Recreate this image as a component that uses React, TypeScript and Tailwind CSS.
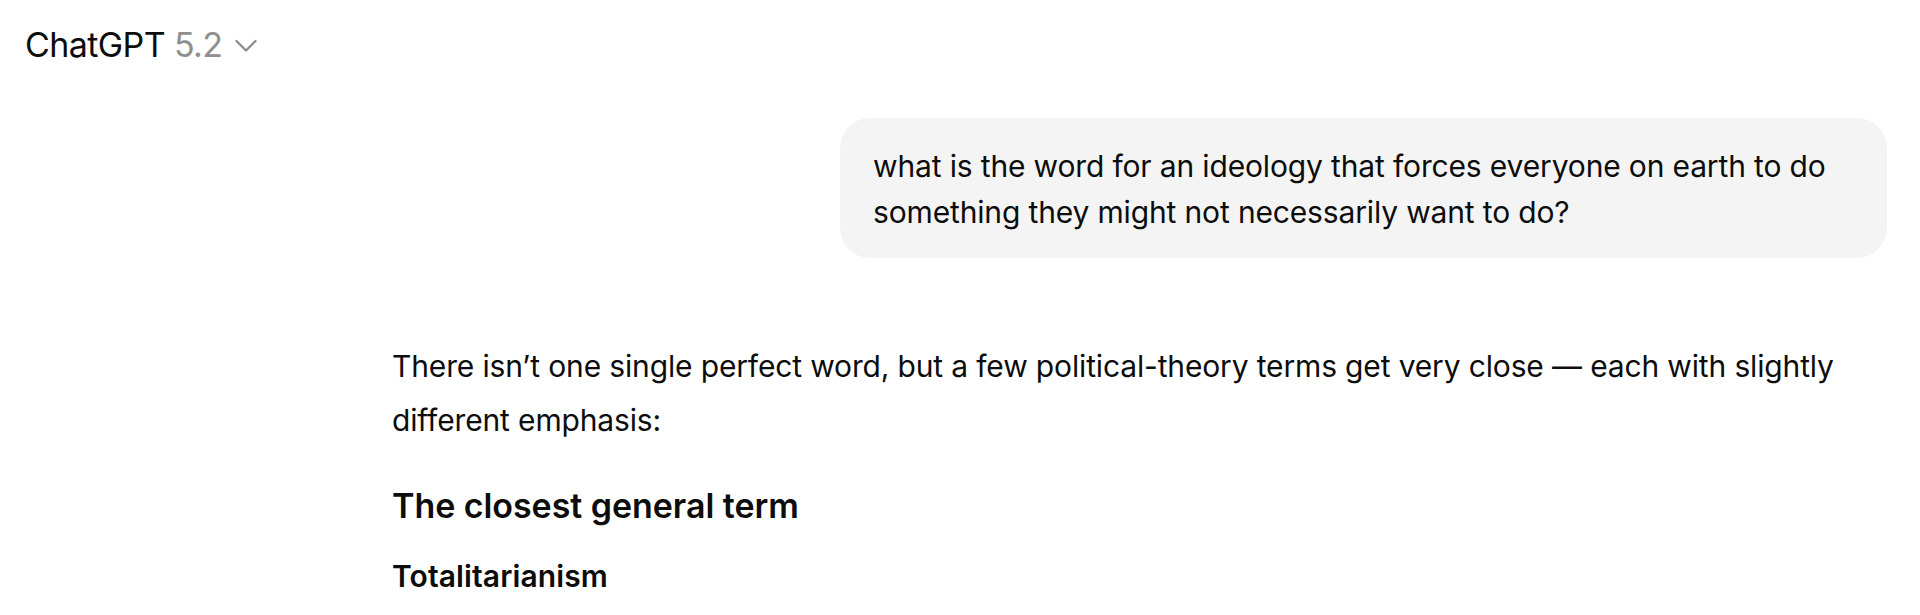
// Conversation header with the model picker
function Header() {
  return (
    <header className="flex items-center pl-[25px] pt-[22px] leading-[46px]">
      <button type="button" className="flex items-center gap-[13px] text-[34px] tracking-[-0.6px]">
        <span>
          <span className="text-[#0d0d0d]">ChatGPT</span>{" "}
          <span className="text-[#8f8f8f]">5.2</span>
        </span>
        <svg width="22" height="14" viewBox="0 0 22 14" fill="none" className="mt-[2px] text-[#8a8a8a]">
          <polyline
            points="1.5,2 11,11.5 20.5,2"
            stroke="currentColor"
            strokeWidth="2.2"
            strokeLinecap="round"
            strokeLinejoin="round"
          />
        </svg>
      </button>
    </header>
  );
}

function UserMessage({ text }: { text: string }) {
  return (
    <div className="flex justify-end">
      <div className="max-w-[1047px] rounded-[30px] bg-[#f4f4f4] px-[33px] pt-[25px] pb-[23px] text-[30px] leading-[46px] tracking-[-0.15px]">
        {text}
      </div>
    </div>
  );
}

function AssistantMessage() {
  return (
    <div className="mt-[81px] text-[30px] leading-[54px]">
      <p className="tracking-[-0.15px]">
        There isn’t one single perfect word, but a few political-theory terms get very close — each with slightly
        different emphasis:
      </p>
      <h3 className="mt-[36px] text-[34px] leading-[46px] font-semibold tracking-[-0.05px]">The closest general term</h3>
      <p className="mt-[20px] font-semibold tracking-[0.1px]">Totalitarianism</p>
    </div>
  );
}

export default function App() {
  return (
    <div className="min-h-[615px] overflow-hidden bg-white font-['Inter',sans-serif] text-[#0d0d0d]">
      <Header />
      <main className="mt-[50px] pl-[392px] pr-[33px]">
        <UserMessage text="what is the word for an ideology that forces everyone on earth to do something they might not necessarily want to do?" />
        <AssistantMessage />
      </main>
    </div>
  );
}
